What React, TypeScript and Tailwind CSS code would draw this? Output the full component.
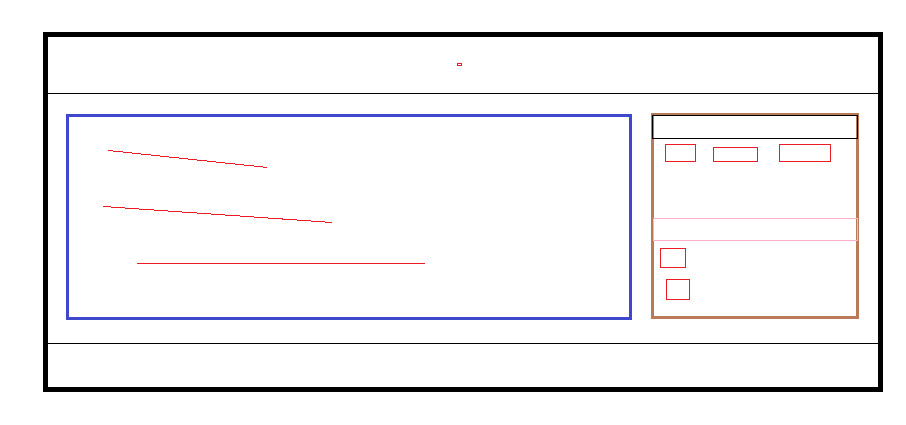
export default function App() {
  return (
    <div className="min-h-screen bg-white pl-[43px] pt-[32px]">
      <div className="flex h-[360px] w-[840px] flex-col border-[5px] border-black">
        {/* Header */}
        <div className="flex h-[57px] items-center border-b border-black pl-[409px]">
          <div className="-mt-px h-[3px] w-[5px] border border-[#ED1C24]" />
        </div>

        {/* Main */}
        <div className="flex flex-1 items-start gap-[19px] pl-[18px] pt-[19px]">
          {/* Content panel */}
          <div className="mt-px flex h-[206px] w-[566px] flex-col items-start border-[3px] border-[#3F48CC] pt-[33px]">
            <svg className="ml-[39px]" width="160" height="18" shapeRendering="crispEdges">
              <line x1="0.5" y1="0.5" x2="159.5" y2="17.5" stroke="#ED1C24" strokeWidth="1" />
            </svg>
            <svg className="ml-[34px] mt-[38px]" width="230" height="17" shapeRendering="crispEdges">
              <line x1="0.5" y1="0.5" x2="229.5" y2="16.5" stroke="#ED1C24" strokeWidth="1" />
            </svg>
            <div className="ml-[68px] mt-[40px] h-px w-[288px] bg-[#ED1C24]" />
          </div>

          {/* Side panel */}
          <div className="flex h-[206px] w-[208px] flex-col items-start border-[3px] border-[#B97A57]">
            <div className="-ml-[2px] -mt-px h-[24px] w-[206px] border border-black" />
            <div className="ml-[11px] mt-[5px] flex items-end">
              <div className="h-[18px] w-[31px] border border-[#ED1C24]" />
              <div className="ml-[17px] h-[15px] w-[45px] border border-[#ED1C24]" />
              <div className="ml-[21px] h-[18px] w-[52px] border border-[#ED1C24]" />
            </div>
            <div className="-ml-px mt-[56px] h-[23px] w-[205px] border border-[#FFAEC9]" />
            <div className="ml-[6px] mt-[7px] h-[20px] w-[26px] border border-[#ED1C24]" />
            <div className="ml-[12px] mt-[11px] h-[21px] w-[24px] border border-[#ED1C24]" />
          </div>
        </div>

        {/* Footer */}
        <div className="h-[44px] border-t border-black" />
      </div>
    </div>
  );
}
